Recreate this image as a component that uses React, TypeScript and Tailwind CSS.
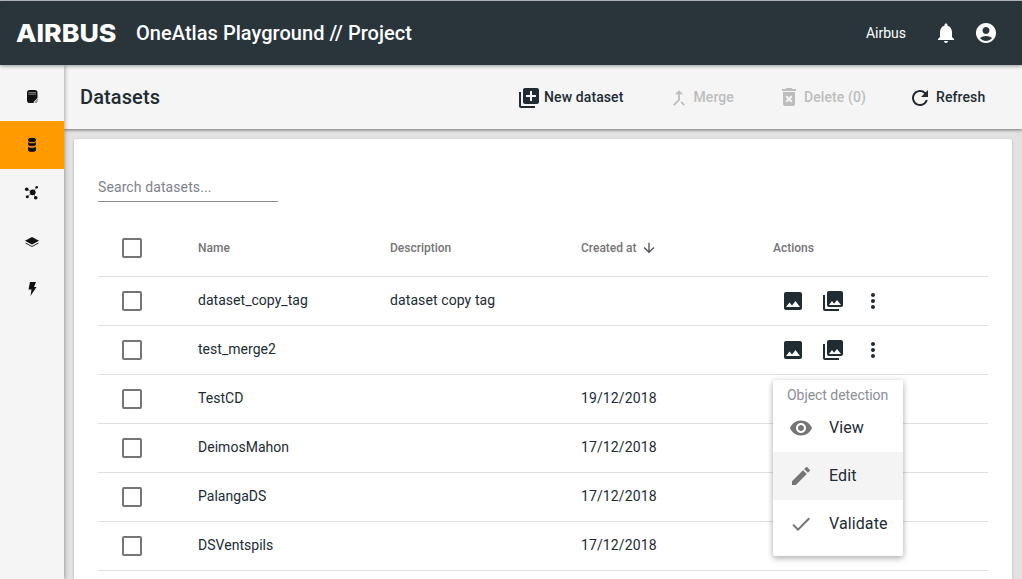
import React from "react";
import {
  MdAccountCircle,
  MdArrowDownward,
  MdCallMerge,
  MdCheck,
  MdDeleteForever,
  MdEdit,
  MdImage,
  MdLibraryAdd,
  MdMoreVert,
  MdNotifications,
  MdPhotoLibrary,
  MdRefresh,
  MdVisibility,
} from "react-icons/md";

const rows = [
  { name: "dataset_copy_tag", description: "dataset copy tag", created: "", actions: true },
  { name: "test_merge2", description: "", created: "", actions: true },
  { name: "TestCD", description: "", created: "19/12/2018", actions: false },
  { name: "DeimosMahon", description: "", created: "17/12/2018", actions: false },
  { name: "PalangaDS", description: "", created: "17/12/2018", actions: false },
  { name: "DSVentspils", description: "", created: "17/12/2018", actions: false },
];

function NotebookIcon() {
  return (
    <svg width="16" height="16" viewBox="0 0 16 16">
      <rect x="3" y="1" width="10.500" height="13" rx="2.800" fill="#111" />
      <path d="M4.500 3.600h7.500M4.500 5.200h7.500" stroke="#aaa" strokeWidth="0.8" />
      <path d="M9.500 14.500l.5-2 3.600-3.600 1.500 1.500-3.600 3.600z" fill="#f5f5f5" />
      <path d="M10.500 14l.3-1.200 2.900-2.900.7.700-2.900 2.900z" fill="#777" />
    </svg>
  );
}

function DatabaseIcon() {
  return (
    <svg width="16" height="16" viewBox="0 0 16 16" fill="#111">
      <ellipse cx="8" cy="3" rx="4" ry="2.200" />
      <path d="M4 5c.7.9 2.200 1.300 4 1.300S11.300 5.900 12 5v2.200c0 1.100-1.800 2-4 2s-4-.9-4-2z" />
      <path d="M4 9.500c.7.9 2.200 1.300 4 1.300s3.300-.4 4-1.300V13c0 1.100-1.800 2-4 2s-4-.9-4-2z" />
    </svg>
  );
}

function NetworkIcon() {
  return (
    <svg width="16" height="16" viewBox="0 0 16 16" fill="#111" stroke="#111" strokeWidth="0.5">
      <path d="M2.700 4.300L8.700 7.300M12.700 2.300L8.700 7.300M3.300 11.700L8.700 7.300M11.700 12.700L8.700 7.300" fill="none" />
      <circle cx="8.700" cy="7.300" r="2.900" stroke="none" />
      <circle cx="2.700" cy="4.300" r="1.800" stroke="none" />
      <circle cx="12.700" cy="2.300" r="1.300" stroke="none" />
      <circle cx="3.300" cy="11.700" r="1.500" stroke="none" />
      <circle cx="11.700" cy="12.700" r="1.800" stroke="none" />
    </svg>
  );
}

function LayersIcon() {
  return (
    <svg width="16" height="16" viewBox="0 0 16 16">
      <path d="M8 4l7 3.800-7 3.800-7-3.800z" fill="#111" />
      <path d="M1.500 10L8 13.500 14.500 10" fill="none" stroke="#111" strokeWidth="0.9" />
    </svg>
  );
}

function BoltIcon() {
  return (
    <svg width="16" height="16" viewBox="0 0 16 16">
      <path d="M6 1h6l-2 5h2.500L6.500 15l1-6.500h-3z" fill="#111" />
    </svg>
  );
}

function SideItem({ active, children }: { active?: boolean; children: React.ReactNode }) {
  return (
    <div className={active ? "h-12 flex items-center justify-center bg-[#ff9b00]" : "h-12 flex items-center justify-center"}>
      {children}
    </div>
  );
}

function ToolButton({ icon, label, disabled, className }: { icon: React.ReactNode; label: string; disabled?: boolean; className?: string }) {
  return (
    <div className={`flex items-center ${disabled ? "text-[#bdbdbd]" : "text-[#212b32]"} ${className ?? ""}`}>
      {icon}
      <span className="text-sm font-medium tracking-[0.1px]">{label}</span>
    </div>
  );
}

function Checkbox() {
  return <div className="w-5 h-5 border-2 border-[#757575] rounded-[2px] ml-6" />;
}

export default function App() {
  return (
    <div className="h-[579px] overflow-hidden flex flex-col bg-[#e2e2e2] text-[#212b32] font-['Roboto',sans-serif]">
      <div className="h-px bg-[#bfc4c7] shrink-0" />
      <header className="h-16 shrink-0 bg-[#29343b] flex items-center text-white relative z-20 shadow-[0_1px_4px_rgba(0,0,0,0.4)]">
        <div className="ml-4 w-[120px] mt-1">
          <span className="inline-block origin-left scale-x-[1.11] text-[24px] leading-none font-extrabold font-['Inter',sans-serif]">AIRBUS</span>
        </div>
        <h1 className="text-xl font-medium tracking-[0.04px]">OneAtlas Playground // Project</h1>
        <span className="ml-auto text-sm">Airbus</span>
        <MdNotifications className="ml-[28px] text-white" size={24} />
        <MdAccountCircle className="ml-4 mr-6 text-white" size={24} />
      </header>

      <div className="flex flex-1 min-h-0">
        <aside className="w-16 shrink-0 bg-[#f5f5f5] pt-2 relative z-10 shadow-[1px_0_4px_rgba(0,0,0,0.3)]">
          <SideItem><NotebookIcon /></SideItem>
          <SideItem active><DatabaseIcon /></SideItem>
          <SideItem><NetworkIcon /></SideItem>
          <SideItem><LayersIcon /></SideItem>
          <SideItem><BoltIcon /></SideItem>
        </aside>

        <main className="flex-1 min-w-0 flex flex-col">
          <div className="h-16 shrink-0 bg-[#f5f5f5] flex items-center pl-4 shadow-[0_1px_3px_rgba(0,0,0,0.5)] relative">
            <h2 className="text-xl font-medium tracking-[0.1px]">Datasets</h2>
            <ToolButton className="ml-[357px]" icon={<MdLibraryAdd size={24} className="mr-[3px] mt-0.5" />} label="New dataset" />
            <ToolButton className="ml-[45px]" disabled icon={<MdCallMerge size={22} className="mr-[3px] mt-0.5" />} label="Merge" />
            <ToolButton className="ml-[43px]" disabled icon={<MdDeleteForever size={24} className="mr-[3px]" />} label="Delete (0)" />
            <ToolButton className="ml-[42px]" icon={<MdRefresh size={24} className="mr-[4px] mt-0.5" />} label="Refresh" />
          </div>

          <div className="flex-1 min-h-0 pt-[10px] pl-[10px] pr-[10px]">
            <section className="h-[600px] bg-white rounded-[2px] px-6 pt-[39px] shadow-[0_1px_3px_rgba(0,0,0,0.2)] relative">
              <div className="w-[180px] h-[24px] border-b border-[#8f8f8f] text-sm tracking-[0.1px] text-[#7d8388] leading-[18px]">Search datasets...</div>

              <div className="mt-[22px] h-[53px] grid grid-cols-[100px_192px_191px_192px_1fr] border-b border-[#e0e0e0] text-xs font-medium text-[#757575]">
                <div className="h-[48px] flex items-center"><Checkbox /></div>
                <div className="h-[48px] flex items-center">Name</div>
                <div className="h-[48px] flex items-center">Description</div>
                <div className="h-[48px] flex items-center">
                  Created at
                  <MdArrowDownward size={16} className="ml-[4px] text-[#4a5156]" />
                </div>
                <div className="h-[48px] flex items-center">Actions</div>
              </div>

              {rows.map((row) => (
                <div key={row.name} className="h-[49px] grid grid-cols-[100px_192px_191px_192px_1fr] items-center border-b border-[#e0e0e0] text-sm">
                  <Checkbox />
                  <div className="-mt-0.5 tracking-[0.03px]">{row.name}</div>
                  <div className="-mt-0.5 tracking-[0.1px]">{row.description}</div>
                  <div className="-mt-0.5 tracking-[0.12px]">{row.created}</div>
                  <div className="flex items-center text-[#212b32]">
                    {row.actions && (
                      <>
                        <MdImage size={24} className="ml-2" />
                        <MdPhotoLibrary size={24} className="ml-4" />
                        <MdMoreVert size={24} className="ml-4" />
                      </>
                    )}
                  </div>
                </div>
              ))}

              <div className="absolute left-[699px] top-[241px] w-[130px] h-[176px] bg-white rounded-[2px] shadow-[0_2px_6px_rgba(0,0,0,0.35)] text-base tracking-[0.1px]">
                <div className="h-6 pl-[14px] pt-[5px] text-sm tracking-[-0.05px] leading-[20px] text-[#8a8f93]">Object detection</div>
                <div className="h-12 flex items-center pl-4">
                  <MdVisibility size={24} className="text-[#757575]" />
                  <span className="ml-4">View</span>
                </div>
                <div className="h-12 flex items-center pl-4 bg-[#f4f4f4]">
                  <MdEdit size={24} className="text-[#757575]" />
                  <span className="ml-4">Edit</span>
                </div>
                <div className="h-12 flex items-center pl-4">
                  <MdCheck size={24} className="text-[#757575]" />
                  <span className="ml-4">Validate</span>
                </div>
              </div>
            </section>
          </div>
        </main>
      </div>
    </div>
  );
}
